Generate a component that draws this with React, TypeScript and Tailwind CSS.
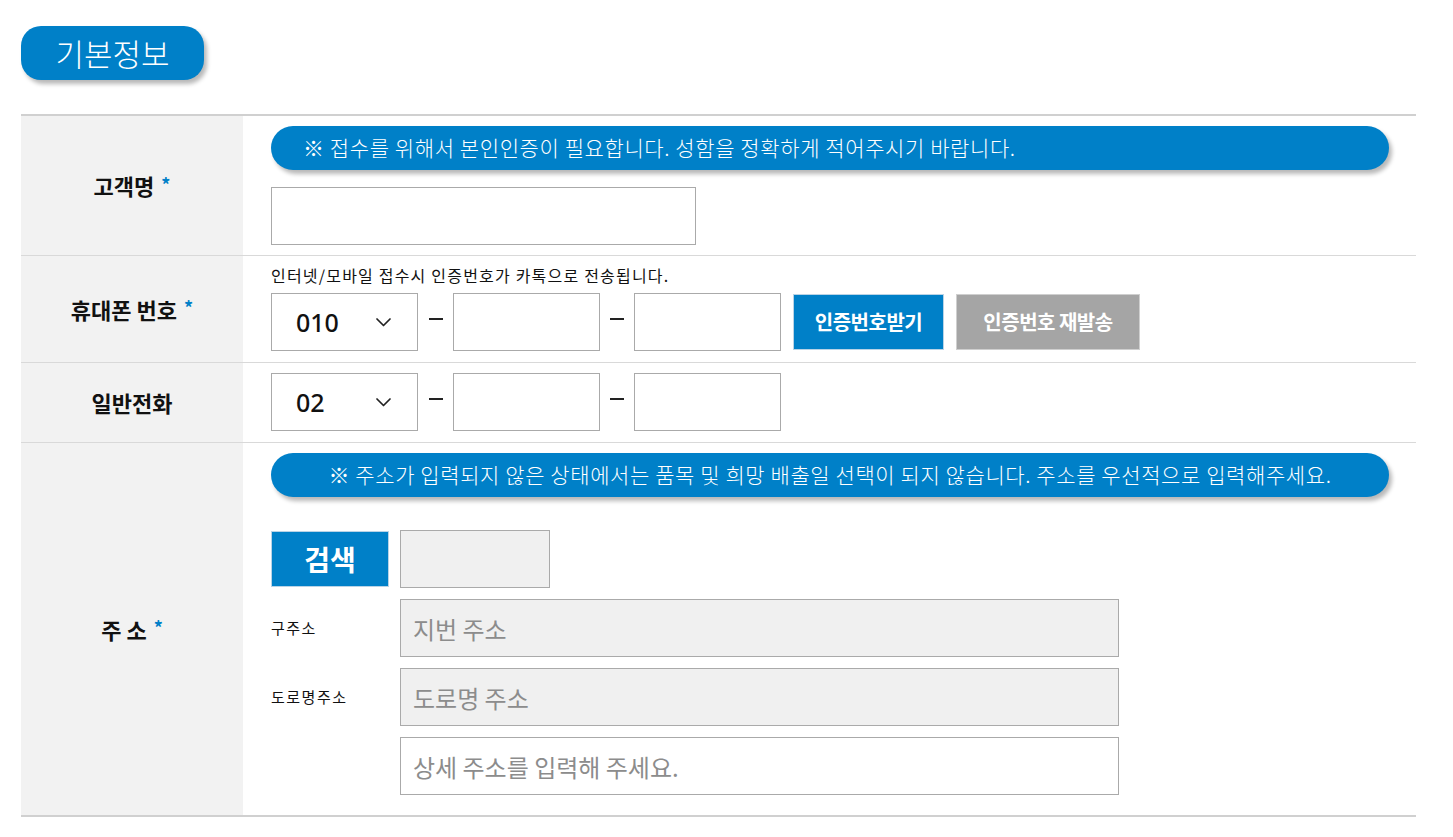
import React from "react";

const FONT = { fontFamily: '"Noto Sans CJK KR", "Noto Sans", sans-serif' };

function Chevron() {
  return (
    <svg width="15" height="9" viewBox="0 0 15 9" fill="none">
      <polyline points="1,1 7.5,7.5 14,1" stroke="#222" strokeWidth="1.7" strokeLinecap="round" strokeLinejoin="round" />
    </svg>
  );
}

function Select({ value }: { value: string }) {
  return (
    <div className="flex h-[58px] w-[147px] items-center justify-between border border-[#aaaaaa] bg-white pl-[24px] pr-[26px]">
      <span className="text-[25px] font-medium leading-none text-[#111]" style={{ fontFamily: '"Noto Sans", "Noto Sans CJK KR", sans-serif' }}>
        {value}
      </span>
      <Chevron />
    </div>
  );
}

function Dash() {
  return (
    <span className="flex h-[58px] w-[14px] items-center justify-center">
      <span className="block h-[2px] w-[14px] bg-[#222] -mt-[6px]" aria-label="-" />
    </span>
  );
}

function Label({ text, star }: { text: string; star?: boolean }) {
  return (
    <div className="flex w-[222px] shrink-0 items-center justify-center bg-[#f2f2f2]">
      <span className="text-[22px] font-bold text-[#111]">{text}</span>
      {star && <span className="ml-[7px] -mt-[3px] text-[18px] font-bold text-[#0080c8]">*</span>}
    </div>
  );
}

function Notice({ children, center }: { children: React.ReactNode; center?: boolean }) {
  return (
    <div
      className={
        "flex h-[44px] w-[1118px] items-center rounded-full bg-[#0080c8] text-[21px] font-light tracking-[0.6px] text-white shadow-[3px_4px_4px_rgba(0,0,0,0.28)] " +
        (center ? "justify-center" : "pl-[32px]")
      }
    >
      {children}
    </div>
  );
}

export default function App() {
  return (
    <div className="min-h-screen bg-white" style={FONT}>
      <div className="ml-[21px] w-[1395px] pt-[26px] pb-[19px]">
        <div className="flex h-[54px] w-[183px] items-center justify-center rounded-[20px] bg-[#0080c8] text-[31px] font-light text-white shadow-[3px_4px_4px_rgba(0,0,0,0.28)]">
          기본정보
        </div>

        <div className="mt-[34px] border-t-2 border-[#d0d0d0]">
          {/* 고객명 */}
          <div className="flex border-b border-[#d9d9d9]">
            <Label text="고객명" star />
            <div className="flex-1 pl-[28px] pr-[27px] pt-[10px] pb-[10px]">
              <Notice>※ 접수를 위해서 본인인증이 필요합니다. 성함을 정확하게 적어주시기 바랍니다.</Notice>
              <input className="mt-[17px] block h-[58px] w-[425px] border border-[#aaaaaa] bg-white px-3 outline-none" />
            </div>
          </div>

          {/* 휴대폰 번호 */}
          <div className="flex border-b border-[#d9d9d9]">
            <Label text="휴대폰 번호" star />
            <div className="flex-1 pl-[28px] pt-[9px] pb-[11px]">
              <div className="text-[16px] leading-[20px] tracking-[1.2px] text-[#111]">인터넷/모바일 접수시 인증번호가 카톡으로 전송됩니다.</div>
              <div className="mt-[8px] flex items-center">
                <Select value="010" />
                <div className="ml-[11px] mr-[10px]"><Dash /></div>
                <input className="block h-[58px] w-[147px] border border-[#aaaaaa] bg-white px-2 outline-none" />
                <div className="ml-[10px] mr-[10px]"><Dash /></div>
                <input className="block h-[58px] w-[147px] border border-[#aaaaaa] bg-white px-2 outline-none" />
                <button className="ml-[12px] h-[56px] w-[151px] border border-[#b9d3e6] bg-[#0080c8] text-[20px] font-bold tracking-[-0.5px] text-white">
                  인증번호받기
                </button>
                <button className="ml-[12px] h-[56px] w-[184px] border border-[#cfcfcf] bg-[#a5a5a5] text-[20px] font-bold tracking-[-0.5px] text-white">
                  인증번호 재발송
                </button>
              </div>
            </div>
          </div>

          {/* 일반전화 */}
          <div className="flex border-b border-[#d9d9d9]">
            <Label text="일반전화" />
            <div className="flex flex-1 items-center pl-[28px] pt-[10px] pb-[11px]">
              <Select value="02" />
              <div className="ml-[11px] mr-[10px]"><Dash /></div>
              <input className="block h-[58px] w-[147px] border border-[#aaaaaa] bg-white px-2 outline-none" />
              <div className="ml-[10px] mr-[10px]"><Dash /></div>
              <input className="block h-[58px] w-[147px] border border-[#aaaaaa] bg-white px-2 outline-none" />
            </div>
          </div>

          {/* 주소 */}
          <div className="flex border-b-2 border-[#d0d0d0]">
            <Label text="주 소" star />
            <div className="flex-1 pl-[28px] pr-[27px] pt-[10px] pb-[20px]">
              <Notice center>※ 주소가 입력되지 않은 상태에서는 품목 및 희망 배출일 선택이 되지 않습니다. 주소를 우선적으로 입력해주세요.</Notice>
              <div className="mt-[33px] flex items-center">
                <button className="h-[56px] w-[118px] border border-[#b9d3e6] bg-[#0080c8] text-[28px] font-bold text-white">
                  검색
                </button>
                <div className="ml-[11px] h-[58px] w-[150px] border border-[#aaaaaa] bg-[#f0f0f0]" />
              </div>
              <div className="mt-[11px] flex items-center">
                <span className="w-[129px] text-[15px] tracking-[1.5px] text-[#111]">구주소</span>
                <input
                  readOnly
                  placeholder="지번 주소"
                  className="block h-[58px] w-[719px] border border-[#aaaaaa] bg-[#f0f0f0] pl-[12px] text-[24px] outline-none placeholder:text-[#8c8c8c]"
                />
              </div>
              <div className="mt-[11px] flex items-center">
                <span className="w-[129px] text-[15px] tracking-[1.5px] text-[#111]">도로명주소</span>
                <input
                  readOnly
                  placeholder="도로명 주소"
                  className="block h-[58px] w-[719px] border border-[#aaaaaa] bg-[#f0f0f0] pl-[12px] text-[24px] outline-none placeholder:text-[#8c8c8c]"
                />
              </div>
              <div className="mt-[11px] flex items-center">
                <span className="w-[129px]" />
                <input
                  placeholder="상세 주소를 입력해 주세요."
                  className="block h-[58px] w-[719px] border border-[#aaaaaa] bg-white pl-[12px] text-[24px] outline-none placeholder:text-[#8c8c8c]"
                />
              </div>
            </div>
          </div>
        </div>
      </div>
    </div>
  );
}
